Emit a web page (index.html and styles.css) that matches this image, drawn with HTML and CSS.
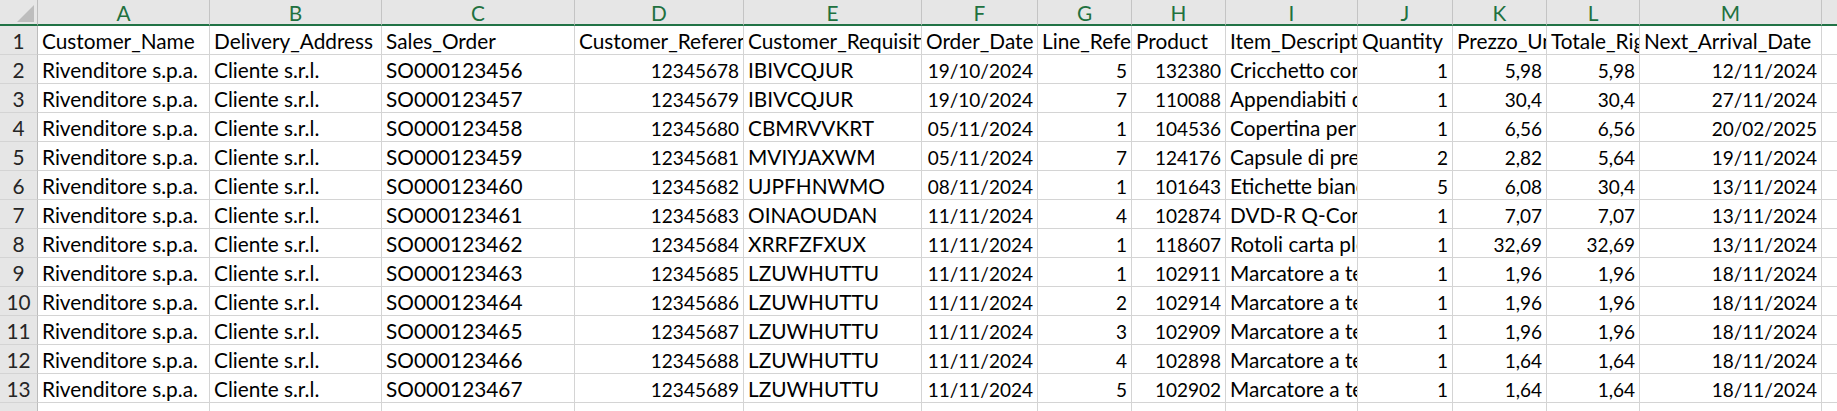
FILE: index.html
```html
<!DOCTYPE html>
<html lang="it">
<head>
<meta charset="utf-8">
<title>Foglio</title>
<link rel="stylesheet" href="styles.css">
</head>
<body>
<div class="sheet">
  <div class="corner"><svg width="37" height="25" viewBox="0 0 37 25"><polygon points="34,5 34,22 17,22" fill="#bdbdbd"/></svg></div>
  <div class="ch">A</div><div class="ch">B</div><div class="ch">C</div><div class="ch">D</div><div class="ch">E</div><div class="ch">F</div><div class="ch">G</div><div class="ch">H</div><div class="ch">I</div><div class="ch">J</div><div class="ch">K</div><div class="ch">L</div><div class="ch">M</div><div class="ch last"></div>

  <div class="rh">1</div><div class="c">Customer_Name</div><div class="c">Delivery_Address</div><div class="c">Sales_Order</div><div class="c">Customer_Reference</div><div class="c">Customer_Requisition</div><div class="c">Order_Date</div><div class="c">Line_Reference</div><div class="c">Product</div><div class="c">Item_Description</div><div class="c">Quantity</div><div class="c">Prezzo_Unitario</div><div class="c">Totale_Riga</div><div class="c">Next_Arrival_Date</div><div class="c last"></div>

  <div class="rh">2</div><div class="c">Rivenditore s.p.a.</div><div class="c">Cliente s.r.l.</div><div class="c">SO000123456</div><div class="c n">12345678</div><div class="c">IBIVCQJUR</div><div class="c n">19/10/2024</div><div class="c n">5</div><div class="c n">132380</div><div class="c">Cricchetto con leva</div><div class="c n">1</div><div class="c n">5,98</div><div class="c n">5,98</div><div class="c n">12/11/2024</div><div class="c last"></div>

  <div class="rh">3</div><div class="c">Rivenditore s.p.a.</div><div class="c">Cliente s.r.l.</div><div class="c">SO000123457</div><div class="c n">12345679</div><div class="c">IBIVCQJUR</div><div class="c n">19/10/2024</div><div class="c n">7</div><div class="c n">110088</div><div class="c">Appendiabiti da parete</div><div class="c n">1</div><div class="c n">30,4</div><div class="c n">30,4</div><div class="c n">27/11/2024</div><div class="c last"></div>

  <div class="rh">4</div><div class="c">Rivenditore s.p.a.</div><div class="c">Cliente s.r.l.</div><div class="c">SO000123458</div><div class="c n">12345680</div><div class="c">CBMRVVKRT</div><div class="c n">05/11/2024</div><div class="c n">1</div><div class="c n">104536</div><div class="c">Copertina per rilegatura</div><div class="c n">1</div><div class="c n">6,56</div><div class="c n">6,56</div><div class="c n">20/02/2025</div><div class="c last"></div>

  <div class="rh">5</div><div class="c">Rivenditore s.p.a.</div><div class="c">Cliente s.r.l.</div><div class="c">SO000123459</div><div class="c n">12345681</div><div class="c">MVIYJAXWM</div><div class="c n">05/11/2024</div><div class="c n">7</div><div class="c n">124176</div><div class="c">Capsule di preparato</div><div class="c n">2</div><div class="c n">2,82</div><div class="c n">5,64</div><div class="c n">19/11/2024</div><div class="c last"></div>

  <div class="rh">6</div><div class="c">Rivenditore s.p.a.</div><div class="c">Cliente s.r.l.</div><div class="c">SO000123460</div><div class="c n">12345682</div><div class="c">UJPFHNWMO</div><div class="c n">08/11/2024</div><div class="c n">1</div><div class="c n">101643</div><div class="c">Etichette bianche</div><div class="c n">5</div><div class="c n">6,08</div><div class="c n">30,4</div><div class="c n">13/11/2024</div><div class="c last"></div>

  <div class="rh">7</div><div class="c">Rivenditore s.p.a.</div><div class="c">Cliente s.r.l.</div><div class="c">SO000123461</div><div class="c n">12345683</div><div class="c">OINAOUDAN</div><div class="c n">11/11/2024</div><div class="c n">4</div><div class="c n">102874</div><div class="c">DVD-R Q-Connect</div><div class="c n">1</div><div class="c n">7,07</div><div class="c n">7,07</div><div class="c n">13/11/2024</div><div class="c last"></div>

  <div class="rh">8</div><div class="c">Rivenditore s.p.a.</div><div class="c">Cliente s.r.l.</div><div class="c">SO000123462</div><div class="c n">12345684</div><div class="c">XRRFZFXUX</div><div class="c n">11/11/2024</div><div class="c n">1</div><div class="c n">118607</div><div class="c">Rotoli carta plotter</div><div class="c n">1</div><div class="c n">32,69</div><div class="c n">32,69</div><div class="c n">13/11/2024</div><div class="c last"></div>

  <div class="rh">9</div><div class="c">Rivenditore s.p.a.</div><div class="c">Cliente s.r.l.</div><div class="c">SO000123463</div><div class="c n">12345685</div><div class="c">LZUWHUTTU</div><div class="c n">11/11/2024</div><div class="c n">1</div><div class="c n">102911</div><div class="c">Marcatore a tempera</div><div class="c n">1</div><div class="c n">1,96</div><div class="c n">1,96</div><div class="c n">18/11/2024</div><div class="c last"></div>

  <div class="rh">10</div><div class="c">Rivenditore s.p.a.</div><div class="c">Cliente s.r.l.</div><div class="c">SO000123464</div><div class="c n">12345686</div><div class="c">LZUWHUTTU</div><div class="c n">11/11/2024</div><div class="c n">2</div><div class="c n">102914</div><div class="c">Marcatore a tempera</div><div class="c n">1</div><div class="c n">1,96</div><div class="c n">1,96</div><div class="c n">18/11/2024</div><div class="c last"></div>

  <div class="rh">11</div><div class="c">Rivenditore s.p.a.</div><div class="c">Cliente s.r.l.</div><div class="c">SO000123465</div><div class="c n">12345687</div><div class="c">LZUWHUTTU</div><div class="c n">11/11/2024</div><div class="c n">3</div><div class="c n">102909</div><div class="c">Marcatore a tempera</div><div class="c n">1</div><div class="c n">1,96</div><div class="c n">1,96</div><div class="c n">18/11/2024</div><div class="c last"></div>

  <div class="rh">12</div><div class="c">Rivenditore s.p.a.</div><div class="c">Cliente s.r.l.</div><div class="c">SO000123466</div><div class="c n">12345688</div><div class="c">LZUWHUTTU</div><div class="c n">11/11/2024</div><div class="c n">4</div><div class="c n">102898</div><div class="c">Marcatore a tempera</div><div class="c n">1</div><div class="c n">1,64</div><div class="c n">1,64</div><div class="c n">18/11/2024</div><div class="c last"></div>

  <div class="rh">13</div><div class="c">Rivenditore s.p.a.</div><div class="c">Cliente s.r.l.</div><div class="c">SO000123467</div><div class="c n">12345689</div><div class="c">LZUWHUTTU</div><div class="c n">11/11/2024</div><div class="c n">5</div><div class="c n">102902</div><div class="c">Marcatore a tempera</div><div class="c n">1</div><div class="c n">1,64</div><div class="c n">1,64</div><div class="c n">18/11/2024</div><div class="c last"></div>

  <div class="rh">14</div><div class="c"></div><div class="c"></div><div class="c"></div><div class="c"></div><div class="c"></div><div class="c"></div><div class="c"></div><div class="c"></div><div class="c"></div><div class="c"></div><div class="c"></div><div class="c"></div><div class="c"></div><div class="c last"></div>
</div>
</body>
</html>
```
FILE: styles.css
```css
html, body {
  margin: 0;
  padding: 0;
  background: #ffffff;
  overflow: hidden;
}

.sheet {
  display: grid;
  grid-template-columns: 38px 172px 172px 193px 169px 178px 116px 94px 94px 132px 95px 94px 93px 182px 1fr;
  grid-template-rows: 26px;
  grid-auto-rows: 29px;
  width: 1837px;
  font-family: Lato, "Liberation Sans", sans-serif;
  font-size: 20.8px;
  color: #000000;
}

.corner {
  background: #e6e6e6;
  border-right: 1px solid #bdbdbd;
  border-bottom: 2px solid #217346;
  box-sizing: border-box;
  overflow: hidden;
}
.corner svg { display: block; }

.ch {
  background: #e6e6e6;
  border-right: 1px solid #c4c4c4;
  border-bottom: 2px solid #217346;
  box-sizing: border-box;
  color: #21713f;
  text-align: center;
  line-height: 25px;
  overflow: hidden;
}
.ch.last { border-right: none; }

.rh {
  background: #e6e6e6;
  border-right: 1px solid #bdbdbd;
  border-bottom: 1px solid #d4d4d4;
  box-sizing: border-box;
  color: #262626;
  text-align: center;
  line-height: 30px;
  overflow: hidden;
}

.c {
  border-right: 1px solid #d4d4d4;
  border-bottom: 1px solid #d4d4d4;
  box-sizing: border-box;
  padding: 0 4px;
  line-height: 30px;
  white-space: nowrap;
  overflow: hidden;
}
.c.n {
  text-align: right;
  font-size: 19px;
  line-height: 31px;
}
.c.last { border-right: none; }
```
